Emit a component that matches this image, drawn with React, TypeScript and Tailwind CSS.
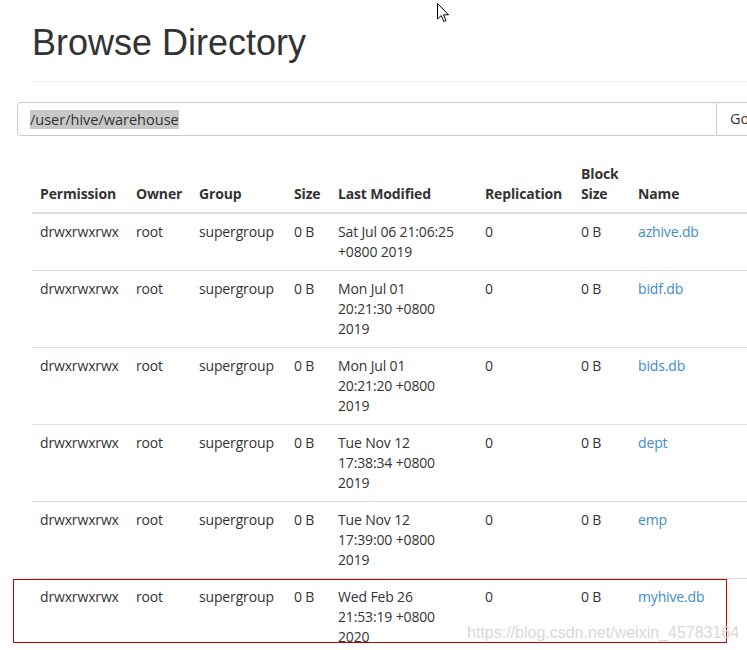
import React from "react";

const rows = [
  { date: ["Sat Jul 06 21:06:25", "+0800 2019"], name: "azhive.db" },
  { date: ["Mon Jul 01", "20:21:30 +0800", "2019"], name: "bidf.db" },
  { date: ["Mon Jul 01", "20:21:20 +0800", "2019"], name: "bids.db" },
  { date: ["Tue Nov 12", "17:38:34 +0800", "2019"], name: "dept" },
  { date: ["Tue Nov 12", "17:39:00 +0800", "2019"], name: "emp" },
  { date: ["Wed Feb 26", "21:53:19 +0800", "2020"], name: "myhive.db" },
];

export default function App() {
  return (
    <div className="relative w-[747px] h-[650px] overflow-hidden bg-white text-[#333]">
      <div className="w-[1100px]">
        <h1
          className="ml-[32px] pt-[23px] mb-[18px] text-[36px] leading-[40px] font-normal text-[#333]"
          style={{ fontFamily: "'Liberation Sans', Arial, sans-serif" }}
        >
          Browse Directory
        </h1>
        <div className="ml-[32px] border-t border-[#eee]" />
        <div className="ml-[17px] mt-[20px] flex h-[34px]" style={{ fontFamily: "'Open Sans', sans-serif" }}>
          <div className="w-[700px] border border-[#ccc] rounded-l-[4px] flex items-center pl-[12px] text-[14.5px]">
            <span className="bg-[#c8c8c8] text-[#333] leading-[19px]">/user/hive/warehouse</span>
          </div>
          <div className="w-[80px] border border-l-0 border-[#ccc] flex items-center pl-[13px] text-[14.5px] text-[#333]">
            Go
          </div>
        </div>
        <table
          className="ml-[32px] mt-[20px] w-[1000px] table-fixed border-collapse text-[14px] leading-[20px]"
          style={{ fontFamily: "'Open Sans', sans-serif", letterSpacing: "-0.15px" }}
        >
          <colgroup>
            <col className="w-[96px]" />
            <col className="w-[63px]" />
            <col className="w-[95px]" />
            <col className="w-[44px]" />
            <col className="w-[147px]" />
            <col className="w-[96px]" />
            <col className="w-[57px]" />
            <col />
          </colgroup>
          <thead>
            <tr className="border-b-2 border-[#ddd]">
              {["Permission", "Owner", "Group", "Size", "Last Modified", "Replication", "Block Size", "Name"].map((h) => (
                <th key={h} className="p-[8px] text-left align-bottom font-bold text-[#333]">
                  {h}
                </th>
              ))}
            </tr>
          </thead>
          <tbody>
            {rows.map((r) => (
              <tr key={r.name} className="border-b border-[#ddd]">
                <td className="p-[8px] align-top">drwxrwxrwx</td>
                <td className="p-[8px] align-top">root</td>
                <td className="p-[8px] align-top">supergroup</td>
                <td className="p-[8px] align-top">0 B</td>
                <td className="p-[8px] align-top">
                  {r.date.map((d) => (
                    <div key={d}>{d}</div>
                  ))}
                </td>
                <td className="p-[8px] align-top">0</td>
                <td className="p-[8px] align-top">0 B</td>
                <td className="p-[8px] align-top">
                  <a className="text-[#428bca]">{r.name}</a>
                </td>
              </tr>
            ))}
          </tbody>
        </table>
      </div>

      <div className="absolute left-[13px] top-[579px] w-[714px] h-[64px] border border-[#c00000] pointer-events-none" />
      <div
        className="absolute left-[467px] top-[623px] text-[16px] leading-[20px] text-[#d8d8d8] whitespace-nowrap"
        style={{ fontFamily: "'Liberation Sans', Arial, sans-serif" }}
      >
        https://blog.csdn.net/weixin_45783164
      </div>
      <svg className="absolute left-[437px] top-[3px]" width="13" height="20" viewBox="0 0 13 20">
        <path d="M0.5 0.5 L0.5 16 L4.2 12.6 L6.8 18.5 L9 17.5 L6.5 11.8 L11.5 11.8 Z" fill="#fff" stroke="#000" strokeWidth="1" strokeLinejoin="miter" />
      </svg>
    </div>
  );
}
